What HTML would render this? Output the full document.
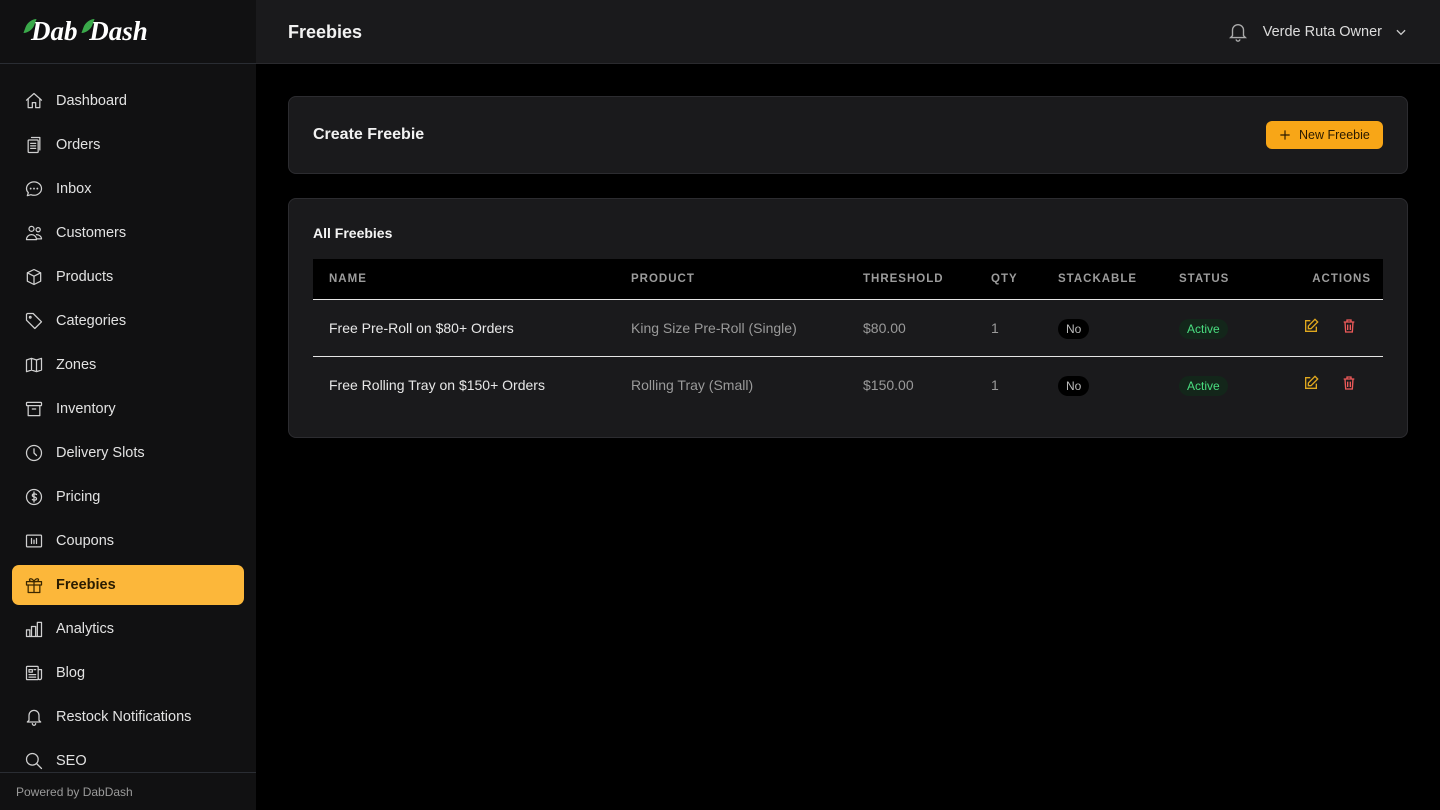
<!DOCTYPE html>
<html><head><meta charset="utf-8"><style>
*{box-sizing:border-box;margin:0;padding:0}
body{width:1440px;height:810px;background:#000;font-family:"Liberation Sans","Noto Sans CJK SC",sans-serif;color:#e5e5e5;overflow:hidden;position:relative}
.side{position:absolute;left:0;top:0;width:256px;height:810px;background:#111112}
.logo{height:64px;border-bottom:1px solid #2a2d33;padding:16px 0 0 26px;font-family:"Liberation Serif",serif;font-style:italic;font-weight:bold;font-size:27px;color:#fff;position:relative}
.leaf{display:inline-block;width:8px;height:14px;background:#3aa94a;border-radius:9px 0 9px 0;transform:skewX(-20deg);margin-right:-3px;vertical-align:7px}
.nav{position:absolute;top:81px;left:12px;width:232px}
.it{height:40px;margin-bottom:4px;display:flex;align-items:center;padding-left:12px;font-size:14.5px;color:#e2e2e2;border-radius:7px}
.it svg{width:20px;height:20px;margin-right:12px;fill:none;stroke:#d0d0d0;stroke-width:1.5;stroke-linecap:round;stroke-linejoin:round}
.it.act{background:#fcb73a;color:#2a1c00;font-weight:bold}
.it.act svg{stroke:#3a2700}
.foot{position:absolute;left:0;top:772px;width:256px;height:38px;border-top:1px solid #2a2d33;background:#111112;font-size:12px;color:#9a9a9a;padding:12px 0 0 16px}
.top{position:absolute;left:256px;top:0;right:0;height:64px;background:#1a1a1c;border-bottom:1px solid #2a2a2e}
.top h1{position:absolute;left:32px;top:22px;font-size:18px;font-weight:bold;color:#f2f2f2}
.user{position:absolute;right:32px;top:21px;font-size:14.5px;color:#ddd;display:flex;align-items:center}
.card{position:absolute;left:288px;width:1120px;background:#1a1a1c;border:1px solid #2c2c30;border-radius:8px}
.btn{position:absolute;right:24px;top:24px;width:117px;height:28px;background:#f8a617;border-radius:6px;color:#2a1a00;font-size:12.5px;display:flex;align-items:center;padding-left:12px}
table{position:absolute;left:24px;top:60px;width:1070px;border-collapse:collapse}
th{background:#000;height:40px;font-size:11.5px;letter-spacing:1px;color:#9c9c9c;text-align:left;font-weight:bold;border-bottom:1.5px solid #e5e5e5}
td{height:57px;font-size:14px;color:#e8e8e8;border-bottom:1.5px solid #e5e5e5}
tr:last-child td{border-bottom:none}
.g{color:#9a9a9a}
.no{background:#000;border-radius:10px;padding:3px 8px;font-size:12px;color:#bbb}
.ac{background:#13261a;border-radius:10px;padding:3px 8px;font-size:12px;color:#4ade80}
</style></head><body>
<div class="side">
<div class="logo"><span class="leaf"></span>Dab <span class="leaf"></span>Dash</div>
<div class="nav">
<div class="it"><svg viewBox="0 0 24 24"><path d="M3 11l9-8 9 8M5 9v11h5v-6h4v6h5V9"/></svg>Dashboard</div>
<div class="it"><svg viewBox="0 0 24 24"><rect x="5" y="6" width="12" height="15" rx="1"/><path d="M9 3h10v15M8 10h6M8 13h6M8 16h6"/></svg>Orders</div>
<div class="it"><svg viewBox="0 0 24 24"><path d="M12 3.5c5 0 9 3.6 9 8s-4 8-9 8c-1.3 0-2.6-.2-3.7-.7L4 20l1.2-3.6C3.800 15 3 13.300 3 11.500c0-4.400 4-8 9-8z"/><path d="M8 11.5h.01M12 11.5h.01M16 11.5h.01" stroke-width="2.2"/></svg>Inbox</div>
<div class="it"><svg viewBox="0 0 24 24"><circle cx="9" cy="7" r="3"/><circle cx="17" cy="8" r="2.5"/><path d="M3 20c0-4 3-6 6-6s6 2 6 6zM15 14c3 0 6 2 6 5h-5"/></svg>Customers</div>
<div class="it"><svg viewBox="0 0 24 24"><path d="M12 3l8 4v10l-8 4-8-4V7zM4 7l8 4 8-4M12 11v10"/></svg>Products</div>
<div class="it"><svg viewBox="0 0 24 24"><path d="M3 4v7l10 10 8-8L11 3H4z"/><circle cx="7.5" cy="7.5" r="1"/></svg>Categories</div>
<div class="it"><svg viewBox="0 0 24 24"><path d="M3 6l6-2 6 2 6-2v14l-6 2-6-2-6 2zM9 4v14M15 6v14"/></svg>Zones</div>
<div class="it"><svg viewBox="0 0 24 24"><rect x="3" y="4" width="18" height="4" rx="1"/><path d="M5 8v12h14V8M10 12h4"/></svg>Inventory</div>
<div class="it"><svg viewBox="0 0 24 24"><circle cx="12" cy="12" r="9"/><path d="M12 7v5l3 3"/></svg>Delivery Slots</div>
<div class="it"><svg viewBox="0 0 24 24"><circle cx="12" cy="12" r="9"/><path d="M15 9c-1-1-5-1.5-5 1s5 1.5 5 4-4 2-5 1M12 6v12"/></svg>Pricing</div>
<div class="it"><svg viewBox="0 0 24 24"><rect x="3" y="5" width="18" height="14" rx="1"/><path d="M9 9v6M12 11v4M15 9v6"/></svg>Coupons</div>
<div class="it act"><svg viewBox="0 0 24 24"><rect x="3" y="8" width="18" height="4"/><path d="M5 12v9h14v-9M12 8v13M12 8c-2-5-7-4-5-1 1 1 5 1 5 1zM12 8c2-5 7-4 5-1-1 1-5 1-5 1"/></svg>Freebies</div>
<div class="it"><svg viewBox="0 0 24 24"><path d="M3 21V13h4v8zM9 21V9h5v12zM16 21V4h5v17zM3 21h18"/></svg>Analytics</div>
<div class="it"><svg viewBox="0 0 24 24"><rect x="3" y="4" width="14" height="16" rx="1"/><path d="M17 8h4v10a2 2 0 0 1-4 0M6 8h4v3H6zM6 14h8M6 17h8M12 8h2"/></svg>Blog</div>
<div class="it"><svg viewBox="0 0 24 24"><path d="M6 16V10a6 6 0 0 1 12 0v6l2 2H4zM10 20a2 2 0 0 0 4 0"/></svg>Restock Notifications</div>
<div class="it"><svg viewBox="0 0 24 24"><circle cx="10" cy="10" r="7"/><path d="M15 15l6 6"/></svg>SEO</div>
</div>
<div class="foot">Powered by DabDash</div>
</div>
<div class="top"><h1>Freebies</h1>
<div class="user"><svg width="22" height="22" viewBox="0 0 24 24" fill="none" stroke="#aaa" stroke-width="1.5"><path d="M6 16V10a6 6 0 0 1 12 0v6l2 2H4zM10 20a2 2 0 0 0 4 0"/></svg><span style="margin:0 12px 0 14px">Verde Ruta Owner</span><svg width="14" height="14" viewBox="0 0 24 24" fill="none" stroke="#ccc" stroke-width="2.2"><path d="M5 9l7 7 7-7"/></svg></div>
</div>
<div class="card" style="top:96px;height:78px">
<div style="position:absolute;left:24px;top:29px;font-size:16px;font-weight:bold;color:#f2f2f2">Create Freebie</div>
<div class="btn"><svg width="14" height="14" viewBox="0 0 24 24" fill="none" stroke="#2a1a00" stroke-width="2"><path d="M12 4v16M4 12h16"/></svg><span style="margin-left:7px">New Freebie</span></div>
</div>
<div class="card" style="top:198px;height:240px">
<div style="position:absolute;left:24px;top:26px;font-size:14px;font-weight:bold;color:#f5f5f5">All Freebies</div>
<table>
<tr><th style="padding-left:16px;width:318px">NAME</th><th style="width:232px">PRODUCT</th><th style="width:128px">THRESHOLD</th><th style="width:67px">QTY</th><th style="width:121px">STACKABLE</th><th style="width:110px">STATUS</th><th style="text-align:right;padding-right:12px">ACTIONS</th></tr>
<tr><td style="padding-left:16px">Free Pre-Roll on $80+ Orders</td><td class="g">King Size Pre-Roll (Single)</td><td class="g">$80.00</td><td class="g">1</td><td><span class="no">No</span></td><td><span class="ac">Active</span></td><td style="padding-left:14px"><svg width="16" height="16" viewBox="0 0 24 24" fill="none" stroke="#e0a81e" stroke-width="2"><path d="M11 4H4v16h16v-7M18 2l4 4-10 10H8v-4z"/></svg><svg style="margin-left:22px" width="16" height="16" viewBox="0 0 24 24" fill="none" stroke="#ef5a5a" stroke-width="2"><path d="M4 6h16M9 6V3h6v3M6 6l1 15h10l1-15M10 10v8M14 10v8"/></svg></td></tr>
<tr><td style="padding-left:16px">Free Rolling Tray on $150+ Orders</td><td class="g">Rolling Tray (Small)</td><td class="g">$150.00</td><td class="g">1</td><td><span class="no">No</span></td><td><span class="ac">Active</span></td><td style="padding-left:14px"><svg width="16" height="16" viewBox="0 0 24 24" fill="none" stroke="#e0a81e" stroke-width="2"><path d="M11 4H4v16h16v-7M18 2l4 4-10 10H8v-4z"/></svg><svg style="margin-left:22px" width="16" height="16" viewBox="0 0 24 24" fill="none" stroke="#ef5a5a" stroke-width="2"><path d="M4 6h16M9 6V3h6v3M6 6l1 15h10l1-15M10 10v8M14 10v8"/></svg></td></tr>
</table>
</div>
</body></html>
